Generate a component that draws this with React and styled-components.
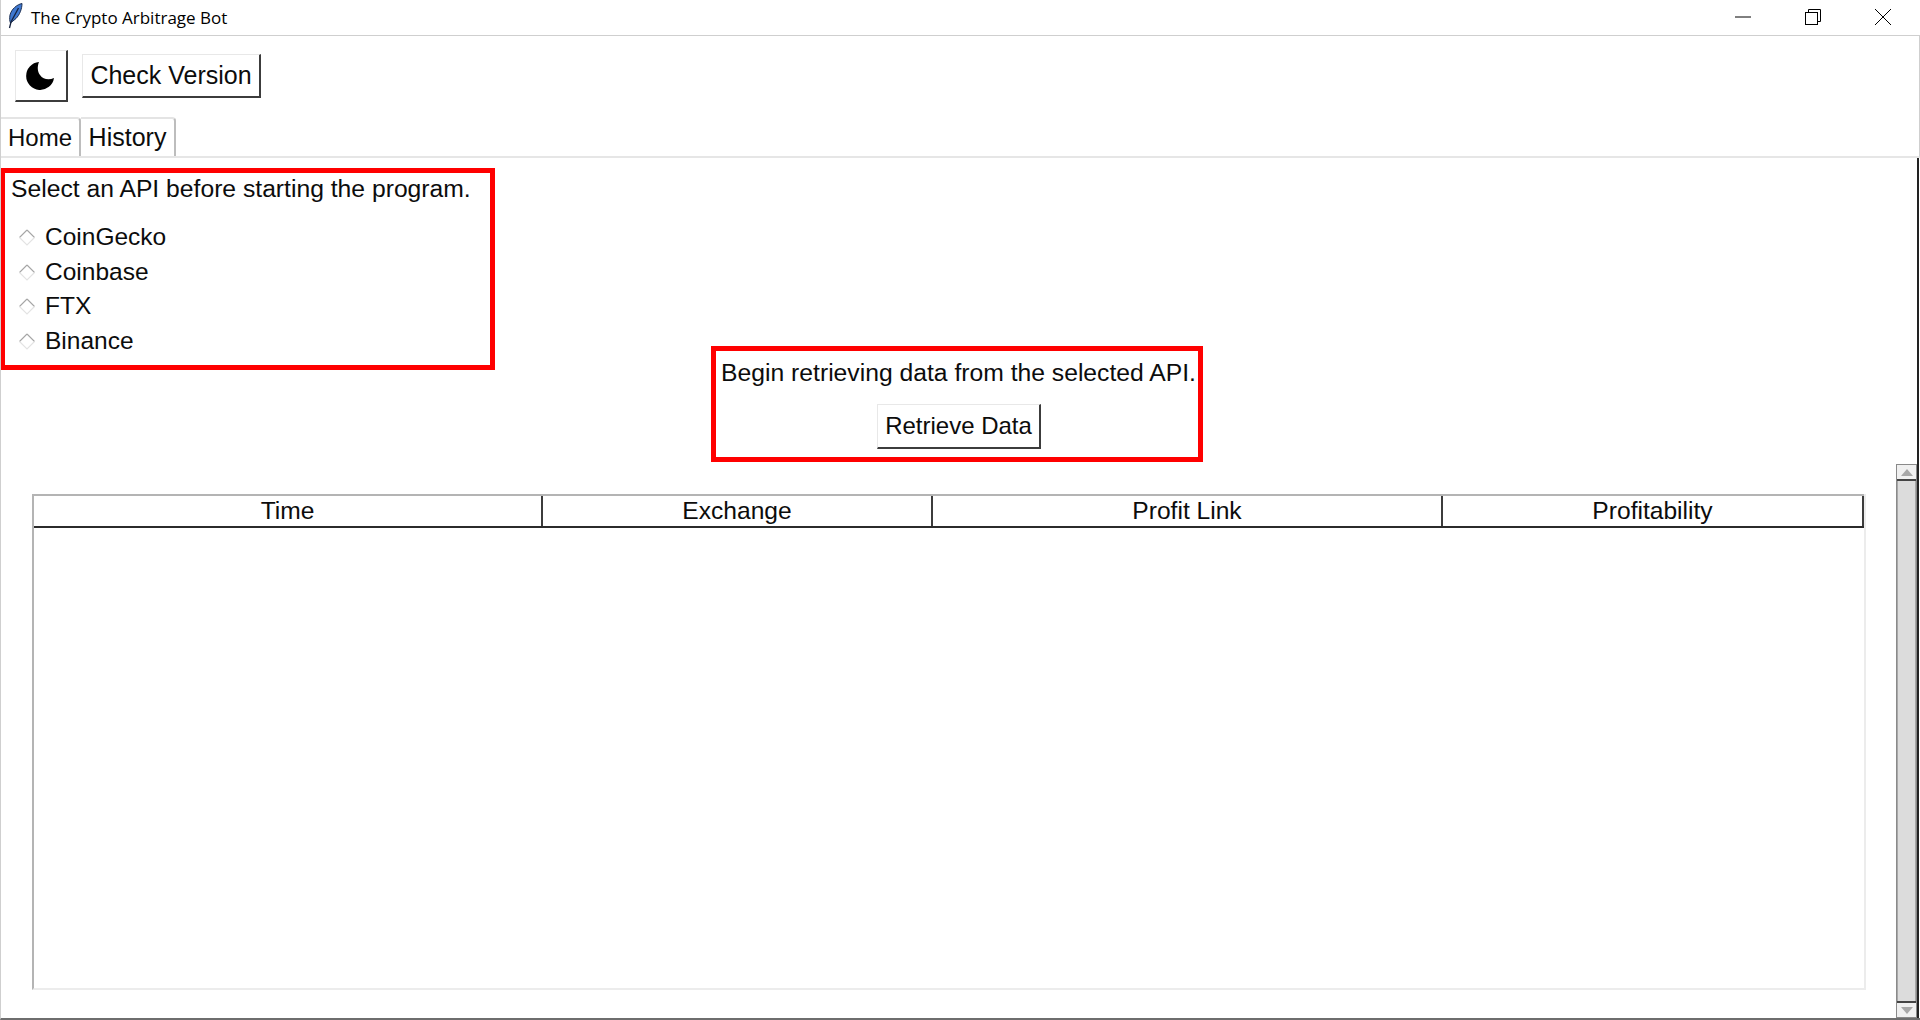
import React from 'react'
import styled, { createGlobalStyle } from 'styled-components'

const GlobalStyle = createGlobalStyle`
  html, body {
    margin: 0;
    padding: 0;
    background: #fff;
  }
  * {
    box-sizing: border-box;
  }
`

const Window = styled.div`
  width: 1920px;
  height: 1020px;
  display: flex;
  flex-direction: column;
  overflow: hidden;
  background: #fff;
  color: #0c0c0c;
  font-family: "Liberation Sans", Arial, sans-serif;
  font-size: 24px;
  border-left: 1px solid #cfcfcf;
  border-bottom: 2px solid #6e6e6e;
`

const TitleBar = styled.div`
  height: 36px;
  flex: none;
  display: flex;
  align-items: flex-start;
  border-bottom: 1px solid #cfcfcf;
  padding: 3px 2px 0 6px;
`

const AppTitle = styled.span`
  font-family: "Open Sans", "Noto Sans", sans-serif;
  font-size: 17px;
  line-height: 30px;
  margin-left: 8px;
  flex: 1;
  color: #000;
`

const WinButton = styled.div`
  width: 70px;
  height: 27px;
  display: flex;
  align-items: center;
  justify-content: center;
`

const Toolbar = styled.div`
  height: 80px;
  flex: none;
  display: flex;
  align-items: center;
  gap: 14px;
  padding: 0 0 0 14px;
  border-right: 1px solid #cfcfcf;
`

const RaisedButton = styled.div`
  display: flex;
  align-items: center;
  justify-content: center;
  background: #fff;
  border: 1px solid #e8e8e8;
  border-right: 2px solid #3c3c3c;
  border-bottom: 2px solid #3c3c3c;
  white-space: nowrap;
  width: ${(p) => p.$w}px;
  height: ${(p) => p.$h}px;
  font-size: ${(p) => p.$size || 24}px;
`

const TabStrip = styled.div`
  height: 42px;
  flex: none;
  display: flex;
  align-items: flex-end;
  border-bottom: 2px solid #e6e6e6;
  border-right: 1px solid #cfcfcf;
`

const Tab = styled.div`
  height: 39px;
  width: ${(p) => p.$w}px;
  display: flex;
  align-items: center;
  justify-content: center;
  background: #fff;
  font-size: ${(p) => p.$size}px;
  border-top: 2px solid #e4e4e4;
  border-right: 2px solid #bdbdbd;
  border-top-right-radius: 4px;
`

const Body = styled.div`
  flex: 1;
  min-height: 0;
  display: flex;
  flex-direction: column;
  margin-right: 1px;
  border-right: 2px solid #222;
`

const TopRow = styled.div`
  display: flex;
  align-items: flex-start;
  padding-top: 10px;
`

const ApiBox = styled.div`
  width: 495px;
  height: 202px;
  margin-left: -1px;
  border: 5px solid #ff0000;
  padding: 1px 0 0 6px;
  display: flex;
  flex-direction: column;
`

const BoxLabel = styled.div`
  line-height: 30px;
  white-space: nowrap;
  font-size: 24.7px;
`

const RadioList = styled.div`
  margin-top: 16px;
  display: flex;
  flex-direction: column;
`

const RadioRow = styled.div`
  height: 34.5px;
  display: flex;
  align-items: center;
  gap: 9px;
  padding-left: 7px;
  font-size: 24.5px;
`

const RetrieveBox = styled.div`
  width: 492px;
  height: 116px;
  margin: 178px 0 0 216px;
  border: 5px solid #ff0000;
  display: flex;
  flex-direction: column;
  align-items: center;
  padding: 7px 0 0 3px;
`

const BoxControls = styled.div`
  margin-top: 16px;
  margin-left: 1px;
`

const TableRow = styled.div`
  display: flex;
  align-items: flex-start;
  margin-top: 2px;
  flex: 1;
  min-height: 0;
`

const TableWrap = styled.div`
  width: 1835px;
  height: 496px;
  margin: 30px 0 0 31px;
  display: flex;
  flex-direction: column;
  border-left: 2px solid #b4b4b4;
  border-right: 2px solid #ececec;
  border-bottom: 2px solid #ececec;
`

const HeaderRow = styled.div`
  height: 34px;
  flex: none;
  display: grid;
  grid-template-columns: 509px 390px 510px 1fr;
  border-top: 2px solid #b4b4b4;
  border-bottom: 2px solid #2b2b2b;
`

const HeaderCell = styled.div`
  display: flex;
  align-items: center;
  justify-content: center;
  font-size: 24.6px;
  border-right: 2px solid #3c3c3c;
`

const Scrollbar = styled.div`
  width: 21px;
  height: 554px;
  margin-left: 30px;
  display: flex;
  flex-direction: column;
  background: #d9d9d9;
  border: 1px solid #8a8a8a;
`

const ScrollArrow = styled.div`
  height: 16px;
  flex: none;
  background: #f0f0f0;
  display: flex;
  align-items: center;
  justify-content: center;
  border-top: ${(p) => (p.$up ? 'none' : '2px solid #444')};
  border-bottom: ${(p) => (p.$up ? '2px solid #444' : 'none')};
`

const ScrollThumb = styled.div`
  flex: 1;
  background: #dcdcdc;
  border-left: 1px solid #a8a8a8;
  border-right: 1px solid #a8a8a8;
`

const apis = ['CoinGecko', 'Coinbase', 'FTX', 'Binance']
const columns = ['Time', 'Exchange', 'Profit Link', 'Profitability']

const Feather = () => (
  <svg width="16" height="26" viewBox="0 0 16 26">
    <path d="M15 0.5C10 1.5 4.5 6 3 12C2.5 15 2.5 18 3.5 20L9 15.5C12.5 12 15 6 15 0.5Z" fill="#3f78d0" stroke="#1d2f52" strokeWidth="1" />
    <path d="M11.5 5L4 19L2.5 25" fill="none" stroke="#16233f" strokeWidth="1.3" />
  </svg>
)

const Diamond = () => (
  <svg width="18" height="18" viewBox="0 0 18 18">
    <path d="M9 2L1.5 9.5" stroke="#a6a6a6" strokeWidth="1.1" fill="none" />
    <path d="M9 2L16.5 9.5" stroke="#a6a6a6" strokeWidth="1.1" fill="none" />
    <path d="M1.5 9.5L9 17L16.5 9.5" stroke="#e3e3e3" strokeWidth="1.1" fill="none" />
  </svg>
)

const Moon = () => (
  <svg width="30" height="30" viewBox="0 0 30 30">
    <path d="M13 1A14 14 0 1 0 28 17C23 19.5 17 18.5 14 14C11.5 10.5 11 6 13 1Z" fill="#000" />
  </svg>
)

const App = () => (
  <Window>
    <GlobalStyle />
    <TitleBar>
      <Feather />
      <AppTitle>The Crypto Arbitrage Bot</AppTitle>
      <WinButton>
        <svg width="16" height="2" viewBox="0 0 16 2"><path d="M0 1H16" stroke="#000" /></svg>
      </WinButton>
      <WinButton>
        <svg width="16" height="16" viewBox="0 0 16 16" fill="none" stroke="#000">
          <rect x="0.5" y="3.5" width="12" height="12" />
          <path d="M3.5 3.5V0.5H15.5V12.5H12.5" />
        </svg>
      </WinButton>
      <WinButton>
        <svg width="16" height="16" viewBox="0 0 16 16" fill="none" stroke="#000"><path d="M0 0L16 16M16 0L0 16" /></svg>
      </WinButton>
    </TitleBar>
    <Toolbar>
      <RaisedButton $w={53} $h={52}><Moon /></RaisedButton>
      <RaisedButton $w={179} $h={44} $size={25}>Check Version</RaisedButton>
    </Toolbar>
    <TabStrip>
      <Tab $w={80} $size={24}>Home</Tab>
      <Tab $w={95} $size={25}>History</Tab>
    </TabStrip>
    <Body>
      <TopRow>
        <ApiBox>
          <BoxLabel>Select an API before starting the program.</BoxLabel>
          <RadioList>
            {apis.map((name) => (
              <RadioRow key={name}><Diamond />{name}</RadioRow>
            ))}
          </RadioList>
        </ApiBox>
        <RetrieveBox>
          <BoxLabel>Begin retrieving data from the selected API.</BoxLabel>
          <BoxControls>
            <RaisedButton $w={164} $h={45}>Retrieve Data</RaisedButton>
          </BoxControls>
        </RetrieveBox>
      </TopRow>
      <TableRow>
        <TableWrap>
          <HeaderRow>
            {columns.map((c) => <HeaderCell key={c}>{c}</HeaderCell>)}
          </HeaderRow>
        </TableWrap>
        <Scrollbar>
          <ScrollArrow $up>
            <svg width="12" height="7" viewBox="0 0 12 7"><path d="M6 0L12 7H0Z" fill="#a8a8a8" /></svg>
          </ScrollArrow>
          <ScrollThumb />
          <ScrollArrow>
            <svg width="12" height="7" viewBox="0 0 12 7"><path d="M0 0H12L6 7Z" fill="#a8a8a8" /></svg>
          </ScrollArrow>
        </Scrollbar>
      </TableRow>
    </Body>
  </Window>
)

export default App
